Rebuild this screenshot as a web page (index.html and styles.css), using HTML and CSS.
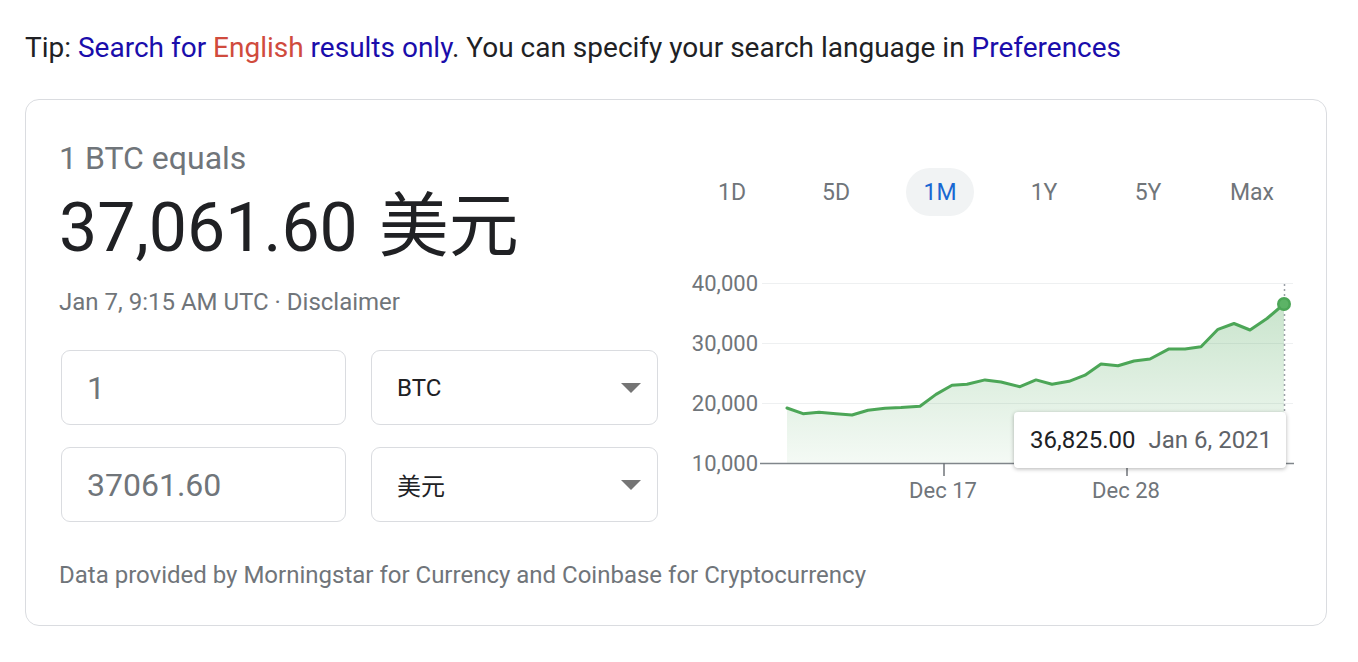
FILE: index.html
```html
<!DOCTYPE html>
<html lang="en">
<head>
<meta charset="utf-8">
<title>BTC to USD</title>
<link rel="stylesheet" href="styles.css">
</head>
<body>
<p class="tip">Tip: <a class="lnk">Search for <span class="hl">English</span> results only</a>. You can specify your search language in <a class="lnk">Preferences</a></p>
<section class="card">
  <div class="main">
    <div class="left">
      <div class="equals">1 BTC equals</div>
      <div class="value">37,061.60 <span class="cjk">美元</span></div>
      <div class="stamp">Jan 7, 9:15 AM UTC · Disclaimer</div>
      <div class="conv">
        <div class="field num">1</div>
        <div class="field sel"><span>BTC</span><span class="caret"></span></div>
        <div class="field num">37061.60</div>
        <div class="field sel"><span class="cjk">美元</span><span class="caret"></span></div>
      </div>
    </div>
    <div class="right">
      <div class="tabs">
        <span class="tab">1D</span>
        <span class="tab">5D</span>
        <span class="tab active">1M</span>
        <span class="tab">1Y</span>
        <span class="tab">5Y</span>
        <span class="tab">Max</span>
      </div>
      <div class="chart">
        <svg class="plot" width="626" height="240" viewBox="680 268 626 240">
          <defs>
            <linearGradient id="fillg" x1="0" y1="0" x2="0" y2="1">
              <stop offset="0" stop-color="#4ca657" stop-opacity="0.3"/>
              <stop offset="1" stop-color="#4ca657" stop-opacity="0.06"/>
            </linearGradient>
          </defs>
          <g stroke="#eef0f1" stroke-width="1">
            <line x1="762" y1="283.5" x2="1293" y2="283.5"/>
            <line x1="762" y1="343.5" x2="1293" y2="343.5"/>
            <line x1="762" y1="403.5" x2="1293" y2="403.5"/>
          </g>
          <g class="axis" text-anchor="end">
            <text x="758" y="291">40,000</text>
            <text x="758" y="351">30,000</text>
            <text x="758" y="411">20,000</text>
            <text x="758" y="471">10,000</text>
          </g>
          <path d="M787,408 L803,413.7 L819,412.3 L836,413.7 L852,415 L868,410.3 L885,408.3 L901,407.6 L920,406.3 L936,394.4 L952,385.3 L967,384.3 L985,379.9 L1001,382 L1020,386.7 L1036,379.9 L1052,384.3 L1069,381.3 L1085,375.2 L1101,364 L1118,365.7 L1134,361 L1150,359 L1169,348.9 L1185,348.9 L1201,346.8 L1218,329.3 L1234,323.5 L1250,330 L1267,318.5 L1284,304 L1284,463 L787,463 Z" fill="url(#fillg)"/>
          <path d="M787,408 L803,413.7 L819,412.3 L836,413.7 L852,415 L868,410.3 L885,408.3 L901,407.6 L920,406.3 L936,394.4 L952,385.3 L967,384.3 L985,379.9 L1001,382 L1020,386.7 L1036,379.9 L1052,384.3 L1069,381.3 L1085,375.2 L1101,364 L1118,365.7 L1134,361 L1150,359 L1169,348.9 L1185,348.9 L1201,346.8 L1218,329.3 L1234,323.5 L1250,330 L1267,318.5 L1284,304" fill="none" stroke="#4ca657" stroke-width="3" stroke-linejoin="round" stroke-linecap="round"/>
          <line x1="1284.5" y1="284" x2="1284.5" y2="463" stroke="#9aa0a6" stroke-width="1.5" stroke-dasharray="2 3"/>
          <line x1="760" y1="463.5" x2="1294" y2="463.5" stroke="#80868b" stroke-width="1.5"/>
          <g stroke="#70757a" stroke-width="1.5">
            <line x1="944" y1="463" x2="944" y2="476"/>
            <line x1="1127" y1="463" x2="1127" y2="476"/>
          </g>
          <g class="axis" text-anchor="middle">
            <text x="943" y="498">Dec 17</text>
            <text x="1126" y="498">Dec 28</text>
          </g>
          <circle cx="1284" cy="304" r="7" fill="#4ca657"/>
          <circle cx="1284" cy="304" r="4.5" fill="#5cb366"/>
        </svg>
        <div class="tooltip"><span class="tt-val">36,825.00</span><span class="tt-date">Jan 6, 2021</span></div>
      </div>
    </div>
  </div>
  <div class="source">Data provided by Morningstar for Currency and Coinbase for Cryptocurrency</div>
</section>
</body>
</html>
```

FILE: styles.css
```css
* { box-sizing: border-box; }
html, body { margin: 0; background: #fff; }
body {
  font-family: Roboto, "Noto Sans CJK SC", sans-serif;
  color: #202124;
  padding: 0 31px 0 25px;
}
.cjk { font-family: "Noto Sans CJK SC", sans-serif; }
.tip {
  margin: 0;
  padding: 31px 0 0 0;
  font-size: 28px;
  line-height: 34px;
  color: #202124;
  height: 99px;
}
.lnk { color: #1a0dab; }
.hl { color: #d04b3d; }
.card {
  border: 1px solid #dadce0;
  border-radius: 14px;
  height: 527px;
  padding: 40px 20px 0 33px;
}
.main { display: flex; gap: 23px; }
.left { width: 598px; display: flex; flex-direction: column; }
.equals { font-size: 32px; line-height: 36px; color: #70757a; }
.value { font-size: 68px; line-height: 80px; height: 80px; margin-top: 12px; color: #202124; }
.value .cjk { line-height: 0; font-size: 70px; margin-left: 4px; }
.stamp { font-size: 24px; line-height: 30px; color: #70757a; margin-top: 19px; }
.conv {
  display: grid;
  grid-template-columns: 285px 287px;
  column-gap: 25px;
  row-gap: 22px;
  margin: 33px 0 0 2px;
}
.field {
  height: 75px;
  border: 1.5px solid #dadce0;
  border-radius: 9px;
  display: flex;
  align-items: center;
  padding: 0 16px 0 25px;
}
.num { font-size: 32px; color: #70757a; }
.sel { font-size: 24px; color: #202124; justify-content: space-between; }
.caret {
  width: 0; height: 0;
  border-left: 10px solid transparent;
  border-right: 10px solid transparent;
  border-top: 10px solid #757575;
}
.right { width: 626px; display: flex; flex-direction: column; }
.tabs { display: flex; margin-top: 28px; height: 48px; }
.tab {
  flex: 0 0 104px;
  display: flex; align-items: center; justify-content: center;
  font-size: 23px; color: #70757a;
}
.tab.active { color: #1967d2; position: relative; z-index: 0; }
.tab.active::before {
  content: "";
  position: absolute;
  left: 18px; right: 18px; top: 0; bottom: 0;
  border-radius: 24px;
  background: #f1f3f4;
  z-index: -1;
}
.chart { position: relative; margin-top: 52px; height: 240px; }
.plot { display: block; }
.axis { font-family: Roboto, sans-serif; font-size: 22px; fill: #70757a; }
.tooltip {
  position: absolute;
  left: 334px; top: 144px;
  width: 272px; height: 56px;
  background: #fff;
  border-radius: 4px;
  box-shadow: 0 1px 4px rgba(0,0,0,0.3);
  display: flex; align-items: center;
  padding-left: 16px;
  font-size: 24px;
  gap: 13px;
}
.tt-val { color: #202124; }
.tt-date { color: #5f6368; }
.source { font-size: 24px; color: #70757a; margin-top: 39px; }
```
